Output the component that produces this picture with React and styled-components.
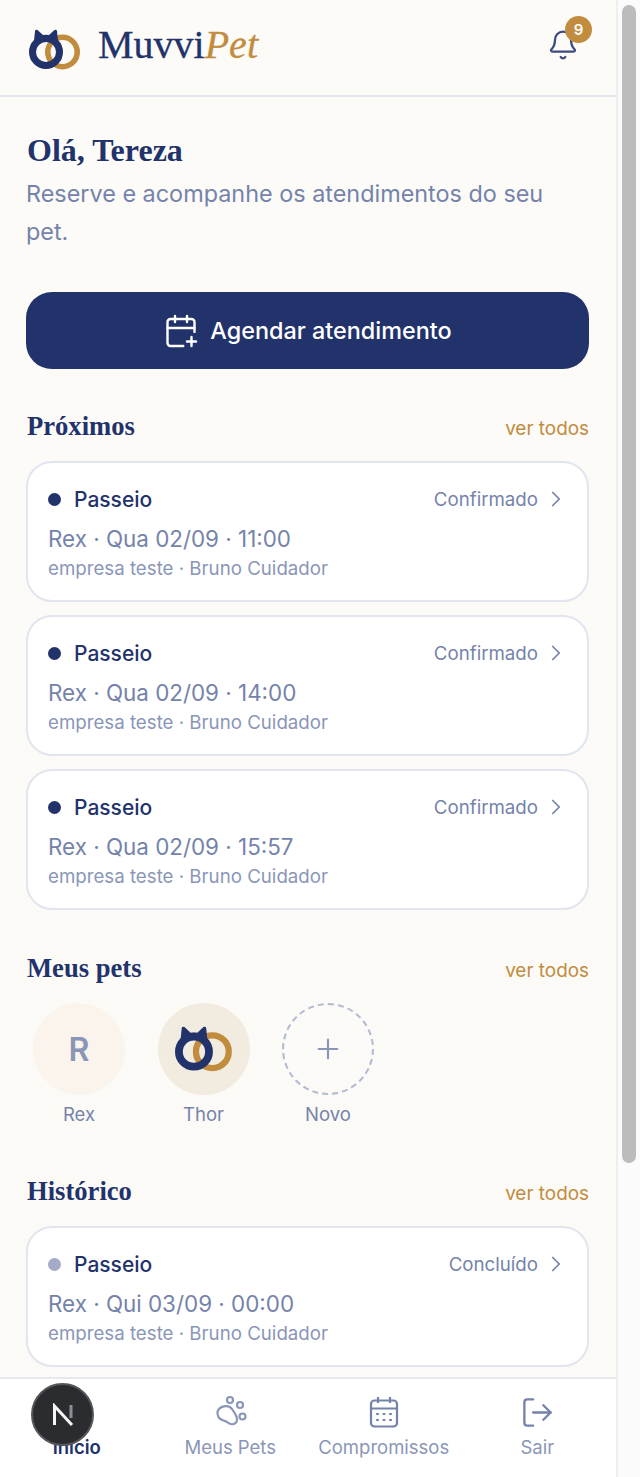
import React from 'react';
import styled, { createGlobalStyle } from 'styled-components';
import { Bell, CalendarPlus, ChevronRight, LogOut, Plus } from 'lucide-react';

const NAVY = '#22326b';
const GOLD = '#c28c3e';
const MUTED = '#7583ab';

const GlobalStyle = createGlobalStyle`
  html, body {
    margin: 0;
    padding: 0;
    height: 1477px;
    overflow: hidden;
    background: #fcfbf8;
  }
  * { box-sizing: border-box; }
  body { font-family: Inter, "Open Sans", sans-serif; }
`;

const Page = styled.div`
  display: flex;
  width: 640px;
  height: 1477px;
  overflow: hidden;
`;

const Column = styled.div`
  position: relative;
  display: flex;
  flex-direction: column;
  width: 616px;
  height: 1477px;
  overflow: hidden;
  background: linear-gradient(180deg, #fcfbf8 0%, #fbfaf6 100%);
`;

const Scrollbar = styled.div`
  flex: 0 0 24px;
  padding: 5px 4px 0 6px;
  background: #fbfbfb;
  border-left: 2px solid #eeeef2;
`;

const ScrollThumb = styled.div`
  width: 14px;
  height: 1158px;
  margin-left: -2px;
  border-radius: 7px;
  background: #bcbcbc;
`;

const Header = styled.header`
  flex: 0 0 97px;
  display: flex;
  align-items: center;
  justify-content: space-between;
  padding: 0 35px 6px 29px;
  border-bottom: 2px solid #e2e4ee;
`;

const Brand = styled.div`
  display: flex;
  align-items: center;
  gap: 17px;
`;

const BrandLogo = styled.span`
  display: flex;
  margin-top: 9px;
`;

const Wordmark = styled.div`
  font-family: "Liberation Serif", serif;
  font-size: 40px;
  line-height: 1;
  color: ${NAVY};
  -webkit-text-stroke: 0.3px currentColor;
  em {
    color: ${GOLD};
    font-style: italic;
  }
`;

const BellWrap = styled.div`
  position: relative;
  width: 34px;
  height: 34px;
  padding-top: 1px;
  color: #3d4b80;
`;

const BellBadge = styled.span`
  position: absolute;
  top: -12px;
  left: 18px;
  width: 27px;
  height: 27px;
  border-radius: 50%;
  background: ${GOLD};
  color: #fff;
  font-size: 15px;
  font-weight: 600;
  line-height: 27px;
  text-align: center;
`;

const Content = styled.main`
  flex: 1;
  padding: 33px 27px 0 26px;
`;

const Greeting = styled.h1`
  margin: 0 0 0 1px;
  font-family: "Liberation Serif", serif;
  font-size: 32px;
  line-height: 40px;
  font-weight: 700;
  color: ${NAVY};
`;

const Lead = styled.p`
  max-width: 540px;
  margin: 5px 0 0;
  font-size: 23.4px;
  line-height: 38px;
  color: ${MUTED};
`;

const PrimaryButton = styled.button`
  display: flex;
  align-items: center;
  justify-content: center;
  gap: 11px;
  width: 100%;
  height: 77px;
  margin-top: 41px;
  border: 0;
  border-radius: 26px;
  background: ${NAVY};
  color: #fff;
  font-family: inherit;
  font-size: 23.4px;
  font-weight: 500;
`;

const SectionHead = styled.div`
  display: flex;
  align-items: center;
  justify-content: space-between;
  height: 32px;
  margin: ${p => p.$top}px 0 ${p => p.$bottom}px;
`;

const SectionTitle = styled.h2`
  margin: 0 0 0 1px;
  font-family: "Liberation Serif", serif;
  font-size: 26.6px;
  font-weight: 700;
  color: ${NAVY};
`;

const SeeAll = styled.a`
  margin-top: 5px;
  font-size: 18.9px;
  color: ${GOLD};
`;

const CardList = styled.div`
  display: flex;
  flex-direction: column;
  gap: 13px;
`;

const Card = styled.article`
  height: 141px;
  padding: 21px 18px 0 20px;
  border: 2px solid #e2e4ee;
  border-radius: 26px;
  background: #fff;
`;

const CardTop = styled.div`
  display: flex;
  align-items: center;
  height: 30px;
`;

const Dot = styled.span`
  width: 13px;
  height: 13px;
  margin-right: 13px;
  border-radius: 50%;
  background: ${p => (p.$done ? '#a4abc5' : NAVY)};
`;

const Service = styled.span`
  flex: 1;
  font-size: 21px;
  font-weight: 500;
  color: ${NAVY};
`;

const Status = styled.span`
  font-size: 18.7px;
  color: ${MUTED};
`;

const Chevron = styled(ChevronRight)`
  flex: none;
  margin-left: 5px;
  color: ${MUTED};
`;

const CardWhen = styled.div`
  margin-top: 10px;
  font-size: 22.4px;
  line-height: 30px;
  color: ${MUTED};
`;

const CardWho = styled.div`
  font-size: 18.7px;
  line-height: 29px;
  color: #8a96b8;
`;

const PetRow = styled.div`
  display: flex;
  gap: 32.5px;
  padding-left: 7px;
`;

const Pet = styled.div`
  display: flex;
  flex-direction: column;
  align-items: center;
  width: 92px;
`;

const PetCircle = styled.div`
  display: flex;
  align-items: center;
  justify-content: center;
  width: 92px;
  height: 92px;
  border-radius: 50%;
  background: ${p => p.$bg || 'transparent'};
  border: ${p => (p.$dashed ? '2px dashed #b3bad2' : '0')};
  color: #8a96b8;
  font-size: 32px;
  font-weight: 600;
`;

const PetName = styled.span`
  margin-top: 8px;
  font-size: 18.5px;
  line-height: 22px;
  color: ${MUTED};
`;

const BottomNav = styled.nav`
  position: absolute;
  left: 0;
  right: 0;
  bottom: 0;
  display: grid;
  grid-template-columns: repeat(4, 1fr);
  height: 100px;
  padding: 16px 2px 0 0;
  border-top: 2px solid #e6e7ef;
  background: #fff;
`;

const NavItem = styled.a`
  display: flex;
  flex-direction: column;
  align-items: center;
  gap: 6px;
  font-size: 18.5px;
  line-height: 24px;
  white-space: nowrap;
  color: ${p => (p.$active ? NAVY : '#8a96b8')};
  font-weight: ${p => (p.$active ? 600 : 400)};
`;

const NavIcon = styled.span`
  display: flex;
  width: 34px;
  height: 34px;
  align-items: center;
  justify-content: center;
`;

const ExitIcon = styled(LogOut)`
  flex: none;
  color: ${MUTED};
`;

const DevBadge = styled.div`
  position: absolute;
  left: 31px;
  top: 1383px;
  display: flex;
  align-items: center;
  justify-content: center;
  width: 63px;
  height: 63px;
  border-radius: 50%;
  border: 2px solid #55565a;
  background: #2b2c30;
`;

const LogoMark = ({ width }) => (
  <svg width={width} viewBox="0 0 52 41" fill="none">
    <circle cx="33.5" cy="23" r="14.7" stroke={GOLD} strokeWidth="5.6" />
    <circle cx="17" cy="23" r="13.5" stroke={NAVY} strokeWidth="7" />
    <path
      d="M5 12 L6 2 Q6.5 0 8.5 1 L14 6 Q17 5.5 20 6 L25.5 1 Q27.5 0 28 2 L29 12 Z"
      fill={NAVY}
    />
  </svg>
);

const PawIcon = () => (
  <svg width="34" height="34" viewBox="-1 0 34 34" fill="none" stroke="#8a96b8" strokeWidth="2.2">
    <circle cx="16" cy="5" r="3" />
    <circle cx="26" cy="10" r="3" />
    <circle cx="28.5" cy="21.5" r="3" />
    <path d="M3.5 17 C5 11 14 9 18 14 C20 17 23.5 21 23 25 C22.5 30 17 30.5 13 27 C10 25 6 25.5 4.5 22 C3.5 20 3 19 3.5 17 Z" />
  </svg>
);

const AgendaIcon = () => (
  <svg width="30" height="32" viewBox="0 0 30 32" fill="none" stroke="#7583ab" strokeWidth="2.2">
    <rect x="2" y="4.5" width="26" height="26" rx="3.5" />
    <path d="M2 12.5H28M9 1V7M21 1V7" />
    <path d="M8 18H9M14.5 18H15.5M21 18H22M8 24H9M14.5 24H15.5M21 24H22" strokeLinecap="round" />
  </svg>
);

const NextMark = () => (
  <svg width="24" height="24" viewBox="0 0 24 24" fill="none" strokeWidth="3">
    <path d="M3.5 22V3L21 22" stroke="#f4f4f5" />
    <path d="M20 2V15" stroke="#8d8e93" />
  </svg>
);

const upcoming = ['11:00', '14:00', '15:57'];

const Booking = ({ when, status, done }) => (
  <Card>
    <CardTop>
      <Dot $done={done} />
      <Service>Passeio</Service>
      <Status>{status}</Status>
      <Chevron size={26} strokeWidth={1.6} />
    </CardTop>
    <CardWhen>{when}</CardWhen>
    <CardWho>empresa teste · Bruno Cuidador</CardWho>
  </Card>
);

export default function App() {
  return (
    <Page>
      <GlobalStyle />
      <Column>
        <Header>
          <Brand>
            <BrandLogo>
              <LogoMark width={52} />
            </BrandLogo>
            <Wordmark>
              Muvvi<em>Pet</em>
            </Wordmark>
          </Brand>
          <BellWrap>
            <Bell size={32} strokeWidth={1.7} />
            <BellBadge>9</BellBadge>
          </BellWrap>
        </Header>

        <Content>
          <Greeting>Olá, Tereza</Greeting>
          <Lead>Reserve e acompanhe os atendimentos do seu pet.</Lead>
          <PrimaryButton>
            <CalendarPlus size={36} strokeWidth={1.6} />
            Agendar atendimento
          </PrimaryButton>

          <SectionHead $top={41} $bottom={19}>
            <SectionTitle>Próximos</SectionTitle>
            <SeeAll>ver todos</SeeAll>
          </SectionHead>
          <CardList>
            {upcoming.map(time => (
              <Booking key={time} when={`Rex · Qua 02/09 · ${time}`} status="Confirmado" />
            ))}
          </CardList>

          <SectionHead $top={42} $bottom={19}>
            <SectionTitle>Meus pets</SectionTitle>
            <SeeAll>ver todos</SeeAll>
          </SectionHead>
          <PetRow>
            <Pet>
              <PetCircle $bg="#fbf4ec">R</PetCircle>
              <PetName>Rex</PetName>
            </Pet>
            <Pet>
              <PetCircle $bg="#f2ebe0">
                <LogoMark width={58} />
              </PetCircle>
              <PetName>Thor</PetName>
            </Pet>
            <Pet>
              <PetCircle $dashed>
                <Plus size={32} strokeWidth={1.6} />
              </PetCircle>
              <PetName>Novo</PetName>
            </Pet>
          </PetRow>

          <SectionHead $top={50} $bottom={19}>
            <SectionTitle>Histórico</SectionTitle>
            <SeeAll>ver todos</SeeAll>
          </SectionHead>
          <Booking when="Rex · Qui 03/09 · 00:00" status="Concluído" done />
        </Content>

        <BottomNav>
          <NavItem $active>
            <NavIcon />
            Início
          </NavItem>
          <NavItem>
            <NavIcon>
              <PawIcon />
            </NavIcon>
            Meus Pets
          </NavItem>
          <NavItem>
            <NavIcon>
              <AgendaIcon />
            </NavIcon>
            Compromissos
          </NavItem>
          <NavItem>
            <NavIcon>
              <ExitIcon size={35} strokeWidth={1.6} />
            </NavIcon>
            Sair
          </NavItem>
        </BottomNav>
        <DevBadge>
          <NextMark />
        </DevBadge>
      </Column>
      <Scrollbar>
        <ScrollThumb />
      </Scrollbar>
    </Page>
  );
}
